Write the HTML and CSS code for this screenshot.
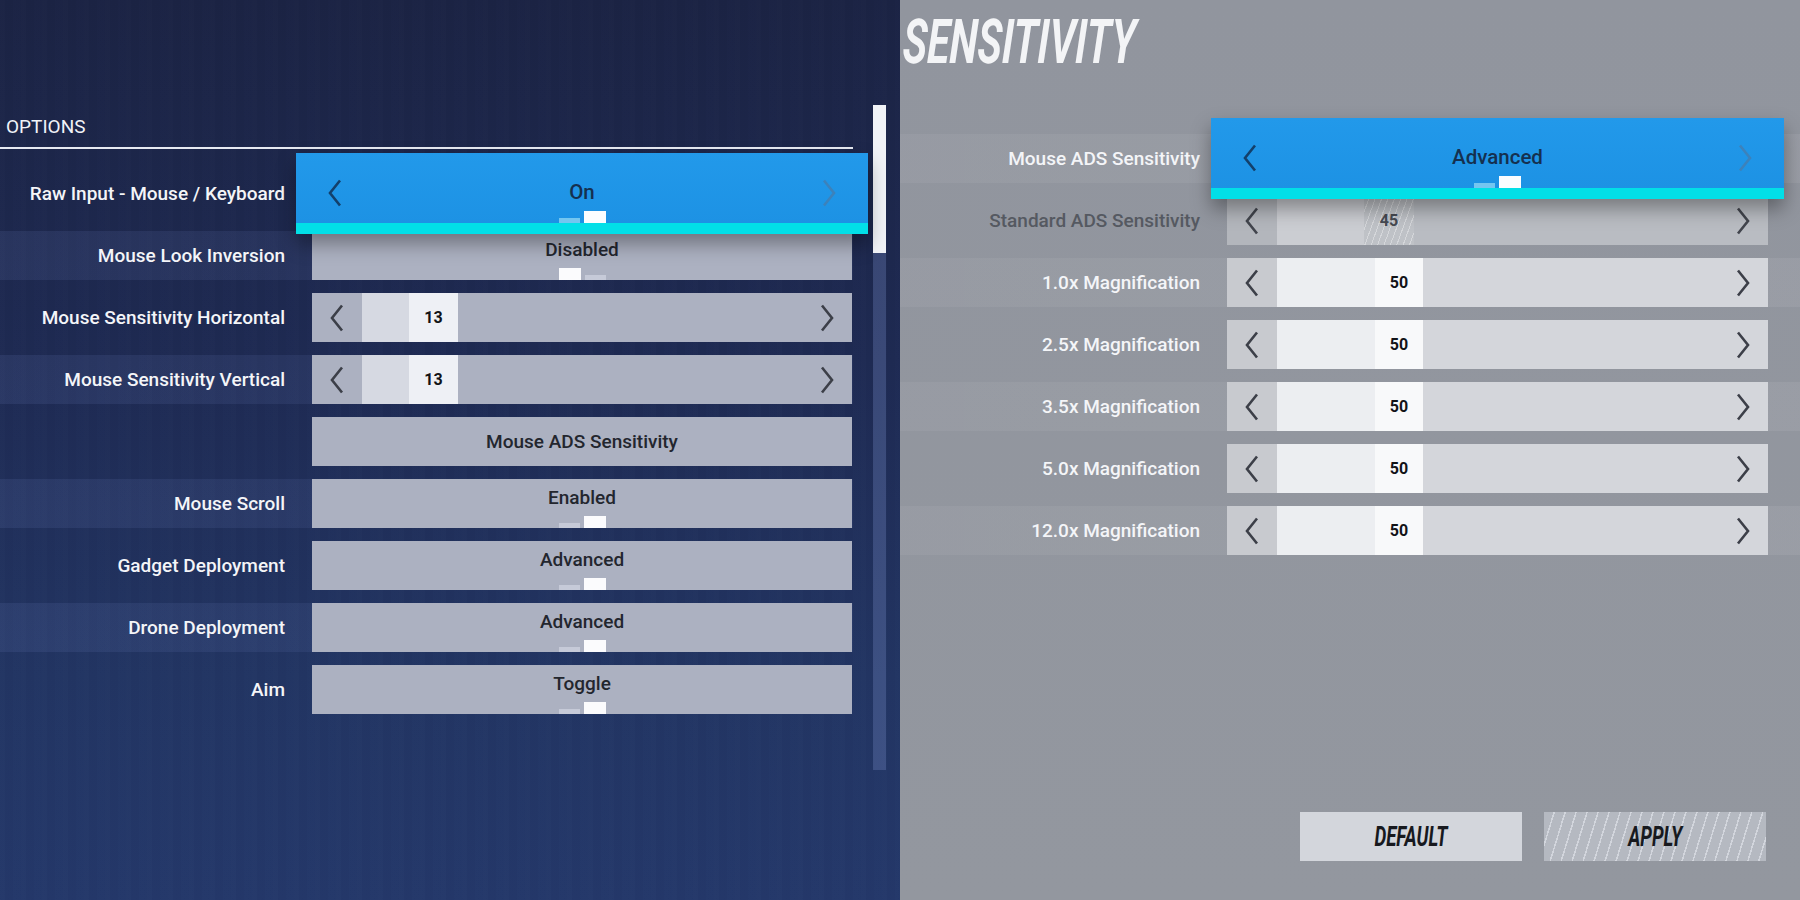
FILE: index.html
```html
<!DOCTYPE html>
<html>
<head>
  <title>Sensitivity Options</title>
  <link rel="stylesheet" href="styles.css">
</head>
<body>

  <!-- chevrons shared by every arrow button -->
  <svg class="defs" width="0" height="0">
    <symbol id="chev-left" viewBox="0 0 16 28"><polyline points="13,1.5 3,14 13,26.5" fill="none" stroke="currentColor" stroke-width="2.6"/></symbol>
    <symbol id="chev-right" viewBox="0 0 16 28"><polyline points="3,1.5 13,14 3,26.5" fill="none" stroke="currentColor" stroke-width="2.6"/></symbol>
  </svg>

  <div class="panel panel-left">
    <div class="list">
      <div class="list-head">OPTIONS</div>
      <div class="rows">

        <div class="row">
          <div class="label">Raw Input - Mouse / Keyboard</div>
          <div class="control toggle focused">
            <svg class="chev chev-l"><use href="#chev-left"/></svg>
            <div class="toggle-body">
              <span class="value-text">On</span>
              <div class="pips"><i class="pip"></i><i class="pip on"></i></div>
            </div>
            <svg class="chev chev-r"><use href="#chev-right"/></svg>
          </div>
        </div>

        <div class="row band">
          <div class="label">Mouse Look Inversion</div>
          <div class="control toggle">
            <div class="toggle-body">
              <span class="value-text">Disabled</span>
              <div class="pips"><i class="pip on"></i><i class="pip"></i></div>
            </div>
          </div>
        </div>

        <div class="row">
          <div class="label">Mouse Sensitivity Horizontal</div>
          <div class="control slider">
            <span class="arrow-zone"><svg class="chev"><use href="#chev-left"/></svg></span>
            <div class="track"><span class="fill" style="width:47px"></span><span class="thumb">13</span></div>
            <span class="arrow-zone"><svg class="chev"><use href="#chev-right"/></svg></span>
          </div>
        </div>

        <div class="row band">
          <div class="label">Mouse Sensitivity Vertical</div>
          <div class="control slider">
            <span class="arrow-zone"><svg class="chev"><use href="#chev-left"/></svg></span>
            <div class="track"><span class="fill" style="width:47px"></span><span class="thumb">13</span></div>
            <span class="arrow-zone"><svg class="chev"><use href="#chev-right"/></svg></span>
          </div>
        </div>

        <div class="row">
          <div class="label"></div>
          <div class="control button">Mouse ADS Sensitivity</div>
        </div>

        <div class="row band">
          <div class="label">Mouse Scroll</div>
          <div class="control toggle">
            <div class="toggle-body">
              <span class="value-text">Enabled</span>
              <div class="pips"><i class="pip"></i><i class="pip on"></i></div>
            </div>
          </div>
        </div>

        <div class="row">
          <div class="label">Gadget Deployment</div>
          <div class="control toggle">
            <div class="toggle-body">
              <span class="value-text">Advanced</span>
              <div class="pips"><i class="pip"></i><i class="pip on"></i></div>
            </div>
          </div>
        </div>

        <div class="row band">
          <div class="label">Drone Deployment</div>
          <div class="control toggle">
            <div class="toggle-body">
              <span class="value-text">Advanced</span>
              <div class="pips"><i class="pip"></i><i class="pip on"></i></div>
            </div>
          </div>
        </div>

        <div class="row">
          <div class="label">Aim</div>
          <div class="control toggle">
            <div class="toggle-body">
              <span class="value-text">Toggle</span>
              <div class="pips"><i class="pip"></i><i class="pip on"></i></div>
            </div>
          </div>
        </div>

      </div>
    </div>
    <div class="scrollbar"><div class="scroll-thumb"></div></div>
  </div>

  <div class="panel panel-right">
    <h1 class="title"><span>SENSITIVITY</span></h1>

    <div class="rows">
      <div class="row band">
        <div class="label">Mouse ADS Sensitivity</div>
        <div class="control toggle focused">
          <svg class="chev chev-l"><use href="#chev-left"/></svg>
          <div class="toggle-body">
            <span class="value-text">Advanced</span>
            <div class="pips"><i class="pip"></i><i class="pip on"></i></div>
          </div>
          <svg class="chev chev-r"><use href="#chev-right"/></svg>
        </div>
      </div>

      <div class="row disabled">
        <div class="label">Standard ADS Sensitivity</div>
        <div class="control slider">
          <span class="arrow-zone"><svg class="chev"><use href="#chev-left"/></svg></span>
          <div class="track"><span class="fill" style="width:87px"></span><span class="thumb">45</span></div>
          <span class="arrow-zone"><svg class="chev"><use href="#chev-right"/></svg></span>
        </div>
      </div>

      <div class="row band">
        <div class="label">1.0x Magnification</div>
        <div class="control slider">
          <span class="arrow-zone"><svg class="chev"><use href="#chev-left"/></svg></span>
          <div class="track"><span class="fill" style="width:98px"></span><span class="thumb">50</span></div>
          <span class="arrow-zone"><svg class="chev"><use href="#chev-right"/></svg></span>
        </div>
      </div>

      <div class="row">
        <div class="label">2.5x Magnification</div>
        <div class="control slider">
          <span class="arrow-zone"><svg class="chev"><use href="#chev-left"/></svg></span>
          <div class="track"><span class="fill" style="width:98px"></span><span class="thumb">50</span></div>
          <span class="arrow-zone"><svg class="chev"><use href="#chev-right"/></svg></span>
        </div>
      </div>

      <div class="row band">
        <div class="label">3.5x Magnification</div>
        <div class="control slider">
          <span class="arrow-zone"><svg class="chev"><use href="#chev-left"/></svg></span>
          <div class="track"><span class="fill" style="width:98px"></span><span class="thumb">50</span></div>
          <span class="arrow-zone"><svg class="chev"><use href="#chev-right"/></svg></span>
        </div>
      </div>

      <div class="row">
        <div class="label">5.0x Magnification</div>
        <div class="control slider">
          <span class="arrow-zone"><svg class="chev"><use href="#chev-left"/></svg></span>
          <div class="track"><span class="fill" style="width:98px"></span><span class="thumb">50</span></div>
          <span class="arrow-zone"><svg class="chev"><use href="#chev-right"/></svg></span>
        </div>
      </div>

      <div class="row band">
        <div class="label">12.0x Magnification</div>
        <div class="control slider">
          <span class="arrow-zone"><svg class="chev"><use href="#chev-left"/></svg></span>
          <div class="track"><span class="fill" style="width:98px"></span><span class="thumb">50</span></div>
          <span class="arrow-zone"><svg class="chev"><use href="#chev-right"/></svg></span>
        </div>
      </div>
    </div>

    <div class="actions">
      <button class="btn btn-default"><span>DEFAULT</span></button>
      <button class="btn btn-apply"><span>APPLY</span></button>
    </div>
  </div>

</body>
</html>
```

FILE: styles.css
```css
* {
  box-sizing: border-box;
}

html, body {
  margin: 0;
}

body {
  font-family: Roboto, 'Liberation Sans', sans-serif;
  display: flex;
  width: 1800px;
  height: 900px;
  overflow: hidden;
}

.defs {
  position: absolute;
}

.panel {
  height: 900px;
}

/* ---------- left: keyboard options list ---------- */

.panel-left {
  width: 900px;
  display: flex;
  align-items: flex-start;
  padding-top: 105px;
  background:
    repeating-linear-gradient(90deg, rgba(255,255,255,0.006) 0 5px, rgba(0,0,0,0.012) 5px 13px, rgba(255,255,255,0.004) 13px 21px),
    linear-gradient(180deg, #1b2344 0%, #1e2a53 40%, #223563 75%, #24386a 100%);
}

.list {
  width: 853px;
}

.list-head {
  color: #f1f3f8;
  font-size: 19px;
  line-height: 22px;
  padding: 11px 0 9px 6px;
  border-bottom: 2px solid #e6e9f1;
}

.rows {
  display: flex;
  flex-direction: column;
  gap: 13px;
}

.panel-left .rows {
  margin-top: 20px;
}

.row {
  display: grid;
  grid-template-columns: 312px 540px;
  height: 49px;
}

.panel-left .row.band {
  background: linear-gradient(90deg, rgba(120,140,205,0.13), rgba(120,140,205,0.08));
}

.label {
  display: flex;
  align-items: center;
  justify-content: flex-end;
  padding-right: 27px;
  color: #f4f5f8;
  font-size: 19px;
  font-weight: 500;
  white-space: nowrap;
}

.control {
  background: #acb1c1;
  color: #23262e;
  font-size: 19px;
  font-weight: 500;
}

.chev {
  width: 16px;
  height: 28px;
  flex: none;
  color: #3c3f48;
}

/* toggles: value on top, page pips on the bottom edge */
.toggle {
  display: flex;
}

.toggle-body {
  flex: 1;
  display: flex;
  flex-direction: column;
  align-items: center;
  padding-top: 8px;
}

.value-text {
  line-height: 22px;
}

.pips {
  margin-top: auto;
  display: flex;
  align-items: flex-end;
  gap: 4px;
}

.pip {
  width: 21px;
  height: 5px;
  background: #c6cad8;
}

.pip.on {
  width: 22px;
  height: 12px;
  background: #fbfbfd;
}

/* the row that has keyboard focus pops out of the list */
.focused {
  position: relative;
  z-index: 2;
  margin: -16px;
  background: linear-gradient(180deg, #2299ea, #1d92e4);
  border-bottom: 11px solid #02dfe7;
  box-shadow: 0 10px 18px rgba(0,0,0,0.35);
  padding: 0 31px;
}

.focused .toggle-body {
  padding-top: 28px;
}

.focused .value-text {
  color: #15304f;
  font-size: 20.5px;
}

.focused .chev {
  margin-top: 26px;
}

.focused .chev-l {
  color: #13406b;
}

.focused .chev-r {
  color: #3c82bb;
}

.focused .pip {
  background: #74c6f0;
}

.focused .pip.on {
  background: #fbfdff;
}

/* sliders */
.slider {
  display: flex;
}

.arrow-zone {
  width: 50px;
  flex: none;
  display: flex;
  align-items: center;
  justify-content: center;
}

.track {
  flex: 1;
  display: flex;
}

.fill {
  background: #d6d9e2;
}

.thumb {
  width: 49px;
  background: #eef0f5;
  display: flex;
  align-items: center;
  justify-content: center;
  color: #121317;
  font-size: 16px;
  font-weight: 700;
}

.button {
  display: flex;
  align-items: center;
  justify-content: center;
}

.scrollbar {
  width: 13px;
  height: 665px;
  margin-left: 20px;
  background: rgba(110,130,185,0.35);
}

.scroll-thumb {
  height: 148px;
  background: #f1f3f7;
}

/* ---------- right: sensitivity page ---------- */

.panel-right {
  flex: 1;
  display: flex;
  flex-direction: column;
  background: linear-gradient(180deg, #91959e, #93979f);
}

.title {
  margin: 0;
  padding-left: 3px;
  line-height: 84px;
  font-size: 62px;
  font-weight: 700;
  font-style: italic;
  color: #f3f4f6;
}

.title span {
  display: inline-block;
  transform: scaleX(0.66) skewX(-3deg);
  transform-origin: left center;
}

.panel-right .rows {
  margin-top: 50px;
}

.panel-right .row {
  grid-template-columns: 327px 541px;
}

.panel-right .row.band {
  background: linear-gradient(90deg, rgba(255,255,255,0.05), rgba(255,255,255,0.07));
}

.panel-right .slider {
  background: #d4d6db;
}

.panel-right .slider .arrow-zone:first-child {
  background: #c8cacf;
}

.panel-right .fill {
  background: #eceef1;
}

.panel-right .thumb {
  width: 48px;
  background: #f8f9fa;
}

.row.disabled .label {
  color: #555961;
}

.row.disabled .slider {
  background: #b9bcc2;
}

.row.disabled .slider .arrow-zone:first-child {
  background: #b3b6bc;
}

.row.disabled .fill {
  background: #cbcdd2;
}

.row.disabled .thumb {
  width: 50px;
  color: #474a52;
  background:
    repeating-linear-gradient(110deg, rgba(255,255,255,0) 0 5px, rgba(255,255,255,0.35) 5px 6px),
    #bfc2c7;
}

.row.disabled .chev {
  color: #42454d;
}

.actions {
  margin-top: auto;
  display: flex;
  justify-content: flex-end;
  gap: 22px;
  padding: 0 34px 39px 0;
}

.btn {
  width: 222px;
  height: 49px;
  border: none;
  padding: 0;
  font-family: Roboto, 'Liberation Sans', sans-serif;
  font-size: 27px;
  font-weight: 700;
  font-style: italic;
  color: #17191e;
  cursor: pointer;
}

.btn span {
  display: inline-block;
  transform: scaleX(0.69);
}

.btn-default {
  background: #d3d6dc;
}

.btn-apply {
  background:
    repeating-linear-gradient(107deg, rgba(255,255,255,0) 0 9px, rgba(220,223,230,0.75) 9px 10.5px),
    #b5b9c1;
}
```
